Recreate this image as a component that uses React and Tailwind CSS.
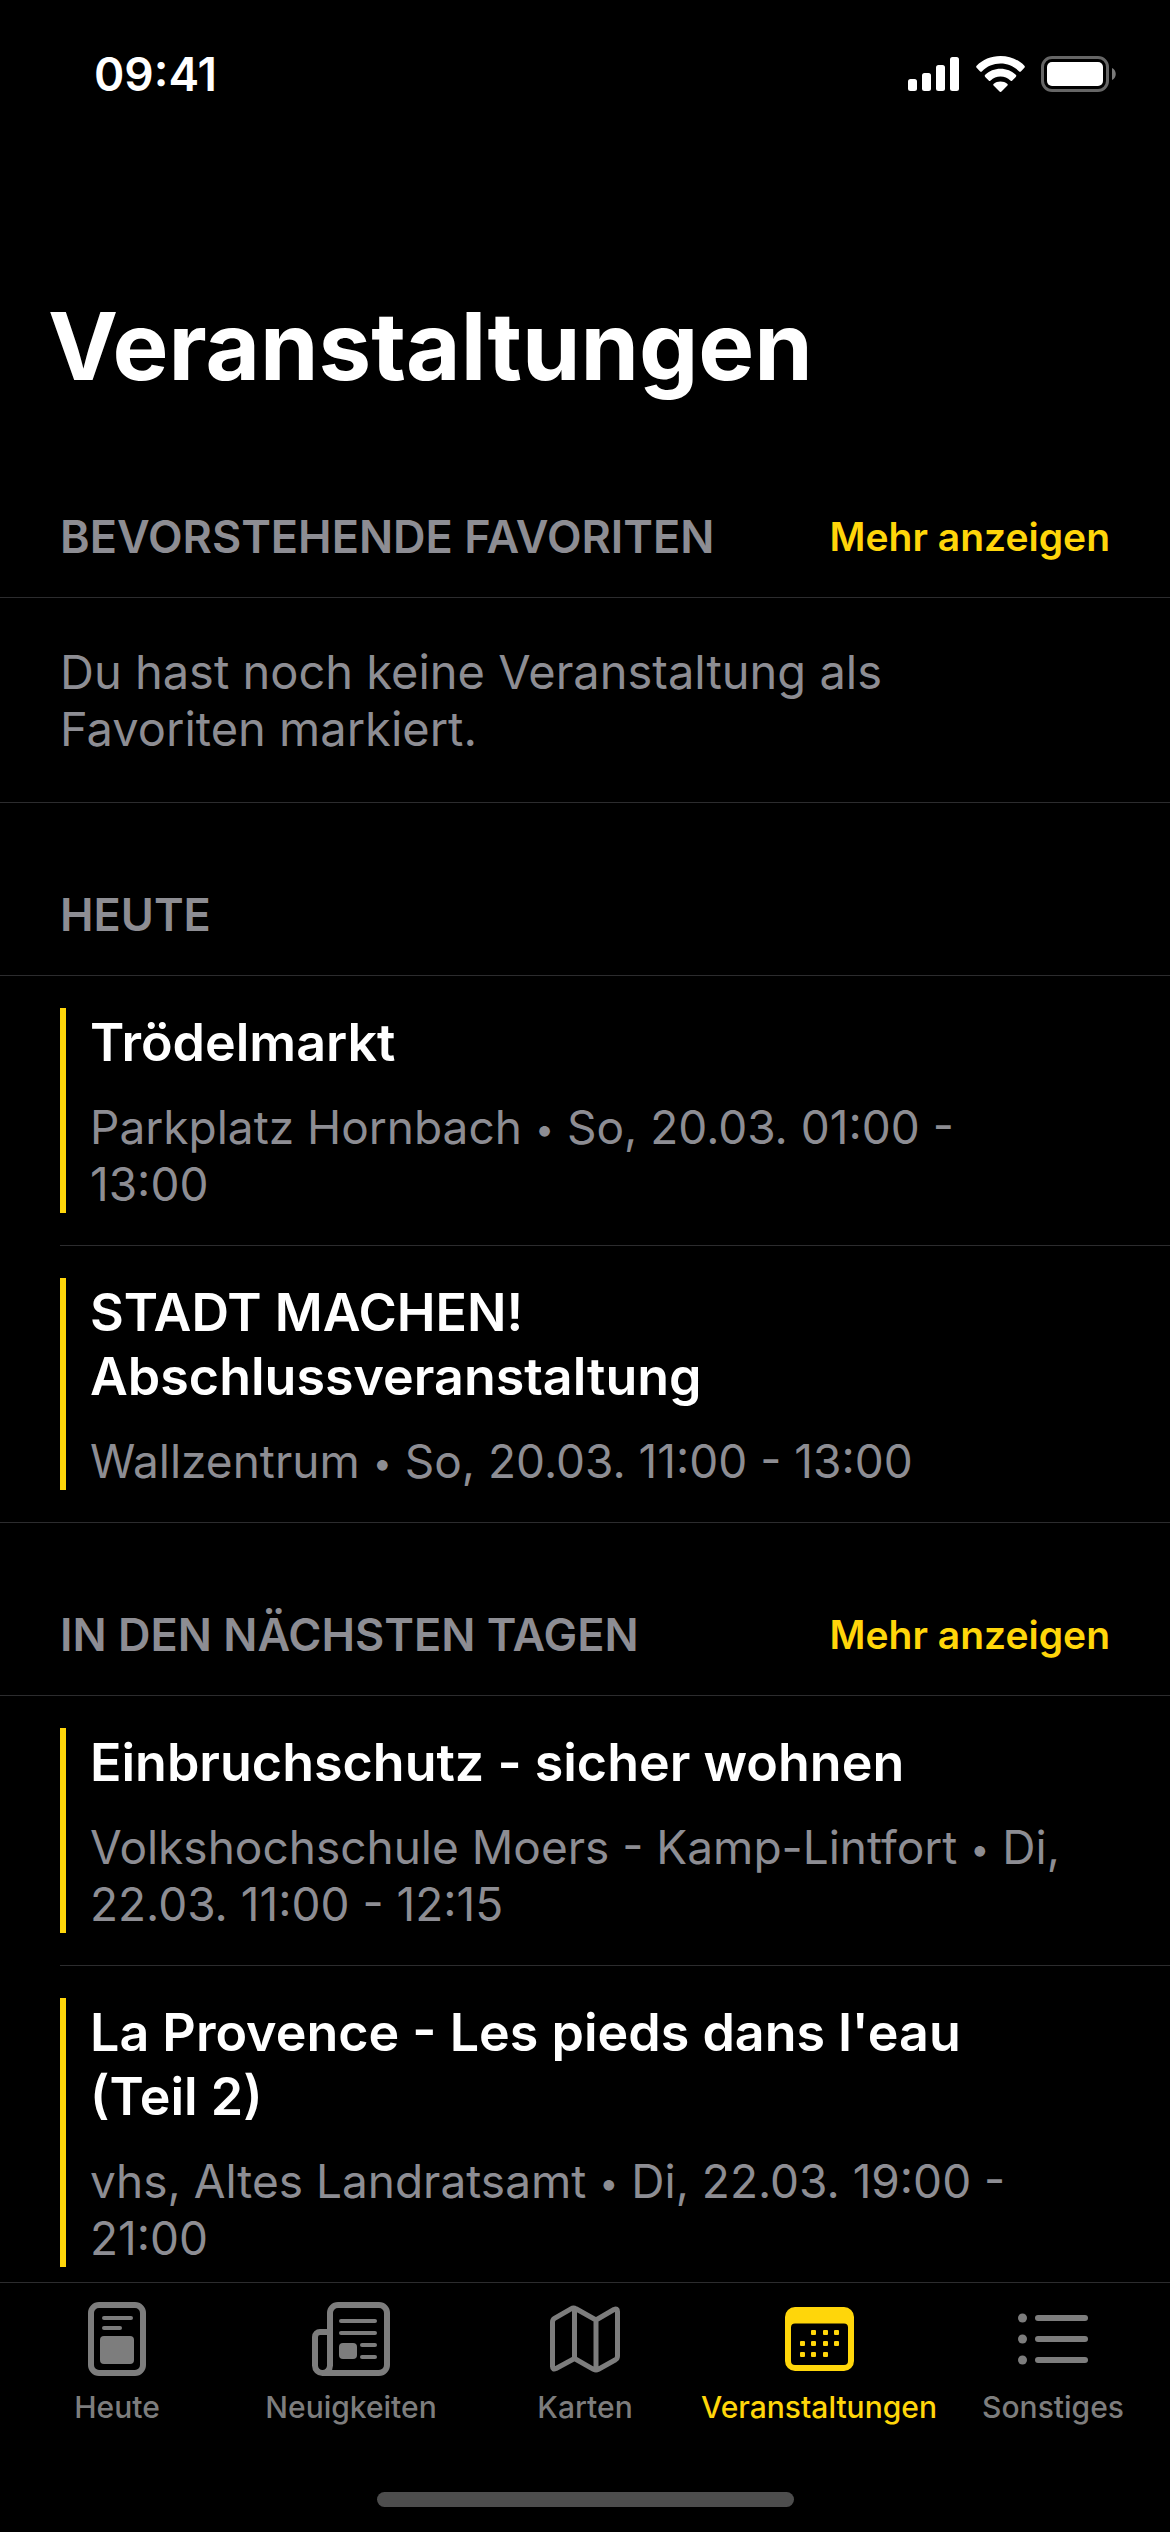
const divider = "border-[#2c2c2e]";

function StatusBar() {
  return (
    <header className="flex h-[148px] shrink-0 items-center justify-between pr-[54px] pl-[94px]">
      <time className="text-[46px] leading-[56px] font-semibold">09:41</time>
      <div className="flex items-center gap-4">
        <svg width="52" height="34" viewBox="0 0 52 34" fill="white" aria-hidden="true">
          <rect x="0" y="22" width="9" height="12" rx="2.5" />
          <rect x="14" y="16" width="9" height="18" rx="2.5" />
          <rect x="28" y="8" width="9" height="26" rx="2.5" />
          <rect x="42" y="0" width="9" height="34" rx="2.5" />
        </svg>
        <svg width="49" height="36" viewBox="0 0 49 36" fill="white" aria-hidden="true">
          <path d="M24.500 0C15 0 6.500 3.700 0.600 9.700a1.500 1.500 0 0 0 0 2l3.300 3.500a1.500 1.500 0 0 0 2.200 0C10.900 10.300 17.400 7.500 24.500 7.500s13.600 2.800 18.400 7.700a1.500 1.500 0 0 0 2.200 0l3.300-3.500a1.500 1.500 0 0 0 0-2C42.500 3.700 34 0 24.500 0Z" />
          <path d="M24.500 12.700c-6 0-11.300 2.300-15.300 6a1.500 1.500 0 0 0 0 2.200l3.500 3.500a1.500 1.500 0 0 0 2 .1c2.600-2.400 6-3.900 9.800-3.900s7.200 1.500 9.800 3.900a1.500 1.500 0 0 0 2-.1l3.500-3.500a1.500 1.500 0 0 0 0-2.200c-4-3.700-9.300-6-15.300-6Z" />
          <path d="M24.500 25.500c-2.600 0-4.900.9-6.700 2.300a1.300 1.300 0 0 0 0 2l5.700 5.700a1.400 1.400 0 0 0 2 0l5.700-5.700a1.300 1.300 0 0 0 0-2c-1.800-1.400-4.100-2.300-6.700-2.300Z" />
        </svg>
        <svg width="75" height="36" viewBox="0 0 75 36" aria-hidden="true">
          <rect x="1.500" y="1.500" width="65" height="33" rx="9.500" fill="none" stroke="#666" strokeWidth="3" />
          <rect x="6" y="6" width="56" height="24" rx="5" fill="white" />
          <path d="M71 12c5 2 5 10 0 12z" fill="#7a7a7a" />
        </svg>
      </div>
    </header>
  );
}

function Section({ title, more, children }) {
  return (
    <section>
      <div className={`flex items-end justify-between border-b px-15 pt-21 pb-8 ${divider}`}>
        <h2 className="text-[45px] leading-[56px] font-semibold text-[#8d8d93]">{title}</h2>
        {more && (
          <a href="#mehr" className="text-[39px] leading-[56px] font-semibold text-[#ffd60a]">
            Mehr anzeigen
          </a>
        )}
      </div>
      {children}
    </section>
  );
}

function Event({ title, place, time }) {
  return (
    <li className={`ml-15 border-b py-8 last:ml-0 last:pl-15 ${divider}`}>
      <div className="border-l-6 border-[#ffd60a] pt-[3px] pr-[90px] pl-6">
        <h3 className="pr-8 text-[52px] leading-[64px] font-semibold">{title}</h3>
        <p className="mt-6 text-[46px] leading-[57px] text-[#8d8d93]">
          {place} <span className="align-[3px] text-[34px] leading-none">•</span> {time}
        </p>
      </div>
    </li>
  );
}

function TodayIcon() {
  return (
    <svg width="58" height="74" viewBox="0 0 58 74" fill="currentColor" aria-hidden="true">
      <rect x="3" y="3" width="52" height="68" rx="8" fill="none" stroke="currentColor" strokeWidth="6" />
      <rect x="14" y="14" width="31" height="4" rx="2" />
      <rect x="14" y="24" width="20" height="4" rx="2" />
      <rect x="12" y="34" width="34" height="28" rx="4" />
    </svg>
  );
}

function NewsIcon() {
  return (
    <svg width="78" height="74" viewBox="0 0 78 74" fill="none" stroke="currentColor" strokeWidth="6" aria-hidden="true">
      <path d="M10.500 71H67a8 8 0 0 0 8-8V11a8 8 0 0 0-8-8H26a8 8 0 0 0-8 8v52.500a7.500 7.500 0 0 1-15 0V35a5 5 0 0 1 5-5h10" />
      <g fill="currentColor" stroke="none">
        <rect x="27" y="17" width="38" height="4" rx="2" />
        <rect x="27" y="29" width="38" height="4" rx="2" />
        <rect x="27" y="41" width="18" height="16" rx="4" />
        <rect x="48" y="41" width="17" height="4" rx="2" />
        <rect x="48" y="53" width="17" height="4" rx="2" />
      </g>
    </svg>
  );
}

function MapIcon() {
  return (
    <svg width="70" height="68" viewBox="0 0 70 68" fill="none" stroke="currentColor" strokeWidth="5" strokeLinejoin="round" aria-hidden="true">
      <path d="M2.500 17Q2.500 14.500 4.500 13.300L21 3.800Q23.500 2.300 26 3.800L46 15 64 4.500Q67.500 3 67.500 6.500V51Q67.500 53.500 65.500 54.700L48.500 64.300Q46 65.500 43.500 64.300L24.500 53.500 6 63.500Q2.500 65 2.500 61.500ZM24.500 3V53.500M46 15V65" />
    </svg>
  );
}

function CalendarIcon() {
  const dots = [[26, 23], [38, 23], [49, 23], [15, 34], [26, 34], [38, 34], [49, 34], [15, 45], [26, 45], [38, 45]];
  return (
    <svg width="69" height="64" viewBox="0 0 69 64" fill="currentColor" aria-hidden="true">
      <path fillRule="evenodd" d="M10 0H59a10 10 0 0 1 10 10V54a10 10 0 0 1-10 10H10A10 10 0 0 1 0 54V10A10 10 0 0 1 10 0ZM10 16.500a4 4 0 0 0-4 4V54a4 4 0 0 0 4 4H59a4 4 0 0 0 4-4V20.500a4 4 0 0 0-4-4Z" />
      {dots.map(([x, y]) => (
        <rect key={`${x}-${y}`} x={x} y={y} width="5" height="5" rx="1" />
      ))}
    </svg>
  );
}

function ListIcon() {
  return (
    <svg width="70" height="52" viewBox="0 0 70 52" fill="currentColor" aria-hidden="true">
      {[5, 26, 47].map((y) => (
        <g key={y}>
          <circle cx="4.500" cy={y} r="4.500" />
          <rect x="17" y={y - 3} width="53" height="6" rx="3" />
        </g>
      ))}
    </svg>
  );
}

const tabs = [
  { label: "Heute", Icon: TodayIcon },
  { label: "Neuigkeiten", Icon: NewsIcon },
  { label: "Karten", Icon: MapIcon },
  { label: "Veranstaltungen", Icon: CalendarIcon, active: true },
  { label: "Sonstiges", Icon: ListIcon },
];

function TabBar() {
  return (
    <nav className={`shrink-0 border-t bg-black pb-[25px] ${divider}`}>
      <ul className="grid grid-cols-5">
        {tabs.map(({ label, Icon, active }) => (
          <li key={label}>
            <button
              type="button"
              aria-current={active ? "page" : undefined}
              className={`flex w-full flex-col items-center pt-[19px] ${active ? "text-[#ffd60a]" : "text-[#7d7d7d]"}`}
            >
              <span className="flex h-[74px] items-center">
                <Icon />
              </span>
              <span className="mt-[11px] text-[30px] leading-[40px] font-medium">{label}</span>
            </button>
          </li>
        ))}
      </ul>
      <div className="mx-auto mt-[65px] h-[15px] w-[417px] rounded-full bg-[#4d4d4d]" />
    </nav>
  );
}

export default function App() {
  return (
    <div className="flex h-screen flex-col bg-black font-[Inter,sans-serif] text-white">
      <StatusBar />
      <main className="min-h-0 flex-1 overflow-y-auto [scrollbar-width:none]">
        <h1 className="mt-[142px] mb-[23px] px-12 text-[94px] leading-[112px] font-bold">Veranstaltungen</h1>
        <Section title="BEVORSTEHENDE FAVORITEN" more>
          <p className={`border-b py-[45px] pr-30 pl-15 text-[47px] leading-[57px] text-[#8d8d93] ${divider}`}>
            Du hast noch keine Veranstaltung als Favoriten markiert.
          </p>
        </Section>
        <Section title="HEUTE">
          <ul>
            <Event title="Trödelmarkt" place="Parkplatz Hornbach" time="So, 20.03. 01:00 - 13:00" />
            <Event title="STADT MACHEN! Abschlussveranstaltung" place="Wallzentrum" time="So, 20.03. 11:00 - 13:00" />
          </ul>
        </Section>
        <Section title="IN DEN NÄCHSTEN TAGEN" more>
          <ul>
            <Event title="Einbruchschutz - sicher wohnen" place="Volkshochschule Moers - Kamp-Lintfort" time="Di, 22.03. 11:00 - 12:15" />
            <Event title="La Provence - Les pieds dans l'eau (Teil 2)" place="vhs, Altes Landratsamt" time="Di, 22.03. 19:00 - 21:00" />
          </ul>
        </Section>
      </main>
      <TabBar />
    </div>
  );
}
